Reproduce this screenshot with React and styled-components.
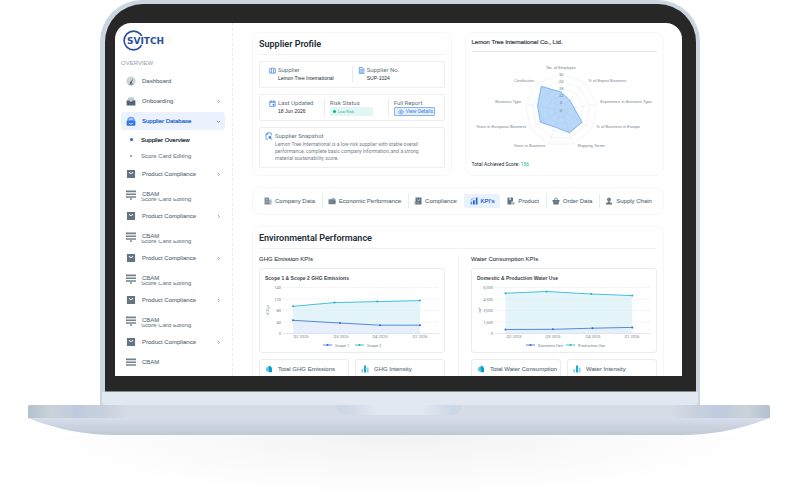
import React from 'react';
import styled, { createGlobalStyle, css } from 'styled-components';

const GlobalStyle = createGlobalStyle`
  * {
    box-sizing: border-box;
  }

  body {
    margin: 0;
    background: #fff;
    font-family: 'Liberation Sans', Arial, sans-serif;
    font-size: 6px;
    line-height: 8px;
    color: #637381;
  }

  h1, h2, h3, p, ul {
    margin: 0;
    padding: 0;
    font-size: inherit;
    font-weight: inherit;
  }

  ul {
    list-style: none;
  }

  svg {
    display: block;
    flex: none;
  }
`;

/* ---------- laptop ---------- */

const Page = styled.div`
  overflow: hidden;
`;

const Lid = styled.div`
  margin: 0 99px 0 100px;
  padding: 4px 4px 0 5px;
  border-radius: 42px 42px 0 0;
  background: #cbd6e1;
`;

const Bezel = styled.div`
  padding: 19px 14px 15px 10px;
  border: solid #85898e;
  border-width: 0 0 1px;
  border-radius: 38px 38px 0 0;
  background: #272727;
`;

const Chin = styled.div`
  height: 13px;
  margin: 0 -2px 0 -3px;
  border-radius: 0 0 3px 3px;
  background: #e1e8f0;
`;

const Screen = styled.div`
  display: flex;
  aspect-ratio: 567 / 353;
  overflow: hidden;
  border-radius: 16px 16px 0 0;
  background: #fff;
`;

const Base = styled.div`
  display: flex;
  justify-content: center;
  height: 13px;
  margin: 0 29px 0 28px;
  border-radius: 2px 2px 0 0;
  background: linear-gradient(
    90deg,
    #b3c0ce 0, #c9d3d9 23px, #becbde 48px, #c8d1de 76px, #d5dce6 100px,
    #d5dce6 calc(100% - 100px), #c8d1de calc(100% - 76px), #becbde calc(100% - 48px), #c9d3d9 calc(100% - 23px), #b3c0ce 100%
  );
`;

const Notch = styled.div`
  width: 17%;
  height: 10px;
  border-radius: 0 0 10px 10px;
  background: linear-gradient(90deg, #cdd8e6 8%, #e1e8f0 32%, #e1e8f0 68%, #cdd8e6 92%);
`;

const Belly = styled.svg`
  width: calc(100% - 57px);
  height: 17px;
  margin: 0 29px 0 28px;
`;

const Shadow = styled.div`
  height: 62px;
  margin: 0 28px;
  background: radial-gradient(ellipse 50% 100% at 50% 0, #f2f2f2, #f9f9f9 50%, #fff);
`;

/* ---------- sidebar ---------- */

const Sidebar = styled.aside`
  flex: none;
  width: 118px;
  padding: 7px 7px 0 6px;
  border-right: 1px dashed #e9edf1;
`;

const SectionLabel = styled.h2`
  margin: 8px 0 5px;
  color: #919eab;
`;

const NavList = styled.ul`
  display: flex;
  flex-direction: column;
  gap: 2px;
`;

const SubList = styled.ul`
  display: flex;
  flex-direction: column;
  gap: 1px;
`;

const NavLink = styled.a`
  display: flex;
  align-items: center;
  height: 18px;
  padding: 0 4px 0 5px;
  border-radius: 3px;
  color: ${({ $active }) => ($active ? '#2065d1' : '#637381')};
  background: ${({ $active }) => ($active ? '#ebf2fe' : 'transparent')};
  -webkit-text-stroke: ${({ $active }) => ($active ? '0.2px' : '0.1px')};
  text-decoration: none;
`;

const NavLabel = styled.span`
  flex: 1;
  margin-left: 6px;
  ${({ $raised }) =>
    $raised &&
    css`
      position: relative;
      z-index: 1;
      background: #fff;
    `}
`;

const SubLink = styled.a`
  display: flex;
  align-items: center;
  gap: 8px;
  height: ${({ $tucked }) => ($tucked ? '14px' : '15px')};
  margin-top: ${({ $tucked }) => ($tucked ? '-14px' : '0')};
  padding: ${({ $tucked }) => ($tucked ? '2px 0 0 8px' : '0 0 0 8px')};
  color: ${({ $active }) => ($active ? '#212b36' : '#7b8894')};
  -webkit-text-stroke: ${({ $active }) => ($active ? '0.2px' : '0.1px')};
  text-decoration: none;

  &::before {
    content: '';
    width: ${({ $active }) => ($active ? '3px' : '2px')};
    height: ${({ $active }) => ($active ? '3px' : '2px')};
    margin: ${({ $active }) => ($active ? '0 0 0 1px' : '0 1px')};
    border-radius: 50%;
    background: ${({ $active }) => ($active ? '#2065d1' : '#7b8894')};
  }
`;

/* ---------- content ---------- */

const Main = styled.main`
  flex: 1;
  min-width: 0;
  padding: 9px 18px 0 19px;
`;

const TopGrid = styled.div`
  display: grid;
  grid-template-columns: 1fr 1fr;
  gap: 13px;
`;

const Card = styled.section`
  padding: 5px 6px 7px;
  border: 1px solid #f4f6f8;
  border-radius: 8px;
`;

const CardTitle = styled.h2`
  margin-bottom: 6px;
  padding-bottom: 4px;
  border-bottom: 1px solid #eff1f3;
  font-family: Roboto, sans-serif;
  font-size: 9px;
  font-weight: 600;
  line-height: 12px;
  color: #212b36;
`;

const CompanyTitle = styled.h2`
  padding: 0 0 5px;
  border-bottom: 1px solid #e4e7ea;
  font-size: 6px;
  -webkit-text-stroke: 0.2px;
  color: #3a434d;
`;

const Box = styled.div`
  display: grid;
  grid-template-columns: ${({ $columns }) => $columns || '1fr'};
  margin-top: 6px;
  padding: 4px 0;
  border: 1px solid #eceef1;
  border-radius: 2px;
`;

const Field = styled.div`
  display: flex;
  gap: 2px;
  padding-left: ${({ $first }) => ($first ? '9px' : '5px')};
  border-left: ${({ $first }) => ($first ? 'none' : '1px solid #e9ecef')};

  > svg {
    margin-top: 1px;
  }
`;

const FieldLabel = styled.h3`
  font-family: Roboto, sans-serif;
  color: #637381;
`;

const FieldValue = styled.p`
  font-size: 5px;
  line-height: 9px;
  color: #212b36;
`;

const RiskBadge = styled.span`
  display: flex;
  align-items: center;
  gap: 2px;
  width: 43px;
  height: 9px;
  padding-left: 3px;
  border-radius: 1px;
  font-size: 4px;
  color: #14b399;
  background: #e2f7f4;

  &::before {
    content: '';
    width: 3px;
    height: 3px;
    border-radius: 50%;
    background: #00b496;
  }
`;

const ViewButton = styled.button`
  display: flex;
  align-items: center;
  gap: 2px;
  width: 41px;
  height: 9px;
  padding: 0 3px;
  border: 1px solid #8db3f0;
  border-radius: 1px;
  font-family: Roboto, sans-serif;
  font-size: 5px;
  line-height: 7px;
  white-space: nowrap;
  color: #3f7de0;
  background: #e6effe;
`;

const Snapshot = styled.div`
  display: flex;
  gap: 2px;
  padding: 0 10px 1px 5px;
`;

const SnapshotText = styled.p`
  margin-top: 1px;
  font-family: Roboto, sans-serif;
  font-size: 5px;
  line-height: 7px;
  color: #74828f;
`;

const Score = styled.p`
  font-size: 5px;
  font-family: Roboto, sans-serif;
  color: #212b36;

  strong {
    font-weight: 400;
    color: #14b399;
  }
`;

const ChartSvg = styled.svg`
  width: 100%;
  height: auto;

  text {
    font-family: ${({ $font }) => $font || 'Roboto'}, sans-serif;
    font-size: 4px;
    fill: #74828f;
  }
`;

const Tabs = styled.nav`
  display: flex;
  justify-content: space-between;
  margin: 11px 0;
  padding: 6px 5px;
  border: 1px solid #f4f6f8;
  border-radius: 8px;
`;

const Tab = styled.button`
  display: flex;
  align-items: center;
  gap: 3px;
  height: 14px;
  padding: 0 6px 0 5px;
  border: 0;
  border-left: 1px solid ${({ $divided }) => ($divided ? '#e9ecef' : 'transparent')};
  border-radius: ${({ $active }) => ($active ? '2px' : '0')};
  font-family: inherit;
  font-size: 6px;
  line-height: 8px;
  white-space: nowrap;
  -webkit-text-stroke: ${({ $active }) => ($active ? '0.2px' : '0.1px')};
  color: ${({ $active }) => ($active ? '#2065d1' : '#637381')};
  background: ${({ $active }) => ($active ? '#e9f1fe' : 'transparent')};
`;

const KpiGrid = styled.div`
  display: grid;
  grid-template-columns: 1fr 1fr;
`;

const KpiColumn = styled.div`
  padding-left: ${({ $second }) => ($second ? '12px' : '0')};
  padding-right: ${({ $second }) => ($second ? '0' : '13px')};
  border-left: ${({ $second }) => ($second ? '1px solid #eceef1' : 'none')};
`;

const KpiTitle = styled.h3`
  margin-bottom: 5px;
  -webkit-text-stroke: 0.1px;
  color: #3a434d;
`;

const ChartBox = styled.div`
  padding-top: 5px;
  border: 1px solid #e9ecef;
  border-radius: 3px;
`;

const ChartTitle = styled.h4`
  height: 9px;
  margin: 0 0 0 5px;
  font-size: 5px;
  font-weight: 700;
  color: #3a434d;
`;

const StatGrid = styled.div`
  display: grid;
  grid-template-columns: 1fr 1fr;
  gap: 6px;
  margin-top: 6px;
`;

const Stat = styled.div`
  display: flex;
  align-items: center;
  gap: 5px;
  height: 30px;
  padding: 0 0 10px 5px;
  border: 1px solid #e9ecef;
  border-radius: 3px;
  -webkit-text-stroke: 0.1px;
  white-space: nowrap;
`;

/* ---------- icons ---------- */

const Glyph = ({ size = 8, children }) => (
  <svg width={size} height={size} viewBox="0 0 16 16" fill="none" aria-hidden="true">
    {children}
  </svg>
);

const icons = {
  gauge: (
    <>
      <circle cx="8" cy="8" r="7.4" fill="#cdd4da" />
      <path d="M4 13.5a7 7 0 0 0 8 0l-2-2.4H6z" fill="#919eab" />
      <path d="M11.5 3.5 9.4 10a1.7 1.7 0 1 1-2-.8z" fill="#54636f" />
    </>
  ),
  inbox: (
    <>
      <path d="M4 2h8l2 5v3H2V7z" fill="#c1cad2" />
      <path d="M1 7h4.5l1 2h3l1-2H15v8H1z" fill="#54636f" />
    </>
  ),
  database: (
    <>
      <path d="M2 7a6 6 0 0 1 12 0v3H2z" fill="#6fa0f0" />
      <path d="M1 7.5h14V14a1.5 1.5 0 0 1-1.5 1.5h-11A1.5 1.5 0 0 1 1 14z" fill="#2f76e6" />
      <path d="M5 5h6M4.5 11c1 2.500 6 2.500 7 0" stroke="#fff" strokeWidth="1.2" />
    </>
  ),
  box: (
    <>
      <path d="M1.5 1.5h13v12a1 1 0 0 1-1 1h-11a1 1 0 0 1-1-1z" fill="#637381" />
      <path d="M5 5c1 3 5 3 6 0" stroke="#eef1f4" strokeWidth="1.8" />
    </>
  ),
  rows: (
    <>
      <path d="M3 2.5h13v2.6H3zM3 7h13v2.6H3zM3 11.5h13v2.6H3z" fill="#74828f" />
      <path d="M0 2.5h3v2.6H0zM0 7h3v2.6H0zM0 11.5h3v2.6H0z" fill="#637381" />
    </>
  ),
  supplier: <path d="M1.5 4h4V2.5h5V4h4v10h-13zM5.5 4v10M10.5 4v10" stroke="#2f76e6" strokeWidth="1.5" />,
  doc: (
    <path d="M3 1h7.5L13.5 4v11H3zM5.5 6h5.5M5.5 9h5.5M5.5 12h5.5" fill="#e1ecfe" stroke="#2f76e6" strokeWidth="1.4" />
  ),
  calendar: (
    <>
      <path d="M1.8 3h12.4v11.5H1.8zM5 .5V3M11 .5V3" stroke="#2f76e6" strokeWidth="1.5" />
      <path d="M2 6h12" stroke="#2f76e6" strokeWidth="1.5" />
      <path d="M8.5 9H12v3.5H8.5z" fill="#2f76e6" />
    </>
  ),
  snapshot: (
    <>
      <path
        d="M6 14.5H3.5A1.5 1.5 0 0 1 2 13V4.5l3-3h6A1.5 1.5 0 0 1 12.5 3v4M5.5 2v3H2.5"
        stroke="#2f76e6"
        strokeWidth="1.4"
      />
      <path d="M8 9h3.5v3.5H8zM11 12l3.5 3" stroke="#2f76e6" strokeWidth="1.6" fill="#8db3f0" />
    </>
  ),
  eye: (
    <>
      <path d="M1 8c3.5-7 10.5-7 14 0-3.5 7-10.5 7-14 0z" stroke="#3f7de0" strokeWidth="1.6" />
      <circle cx="8" cy="8" r="2.3" stroke="#3f7de0" strokeWidth="1.6" />
    </>
  ),
  building: (
    <>
      <path d="M1 1h9v14H1z" fill="#84919c" />
      <path d="M10 5h5v10h-5z" fill="#a5b0ba" />
      <path d="M4 5h3M4 9h3M12 8h1.5M12 11h1.5" stroke="#d5dbe0" strokeWidth="1" />
    </>
  ),
  wallet: (
    <>
      <path d="M5 4 12 1l2 4z" fill="#a5b0ba" />
      <path d="M1 4.5h14v10H1z" fill="#75838f" />
      <path d="M11 8.5h4V11h-4z" fill="#54636f" />
    </>
  ),
  shield: (
    <>
      <path d="M3 1h12v14H3z" fill="#637381" />
      <path d="M6.5 5 9 8l3-4M6 11.5h3" stroke="#dfe4e8" strokeWidth="1.4" />
      <path d="M1 8h3v7H1z" fill="#9aa6b1" />
    </>
  ),
  kpi: (
    <>
      <path d="M1 9h3.5v6H1z" fill="#5b92ee" />
      <path d="M6 6.5h3.5V15H6zM11.5 1H15v14h-3.5z" fill="#2065d1" />
      <path d="M1 6.5 8 2" stroke="#7ca9f3" strokeWidth="1.8" />
    </>
  ),
  product: (
    <>
      <path d="M1 1h4v5h3V1h4v8H9v6H1z" fill="#637381" />
      <path d="M5 1h3v4H5z" fill="#b4bdc6" />
      <path d="M10.5 10.5H15V15h-4.5z" fill="#9aa6b1" />
    </>
  ),
  basket: (
    <>
      <path d="M4.5 7 6.500 2h3l2 5" stroke="#75838f" strokeWidth="1.8" />
      <path d="M1 6h14v3h-1l-1 6H3L2 9H1z" fill="#637381" />
      <path d="M5 9.5h6" stroke="#aab4bd" strokeWidth="1" />
    </>
  ),
  person: (
    <>
      <circle cx="8" cy="5" r="4" fill="#75838f" />
      <path d="M5.500 9h5v2.500H14V15H2v-3.500h3.500z" fill="#637381" />
    </>
  ),
  pie: (
    <>
      <path d="M5 3a6 6.500 0 0 0-2 9.500L9 14V6z" fill="#5cc8e2" />
      <path d="M7 1.500a6.500 6.500 0 0 1 7 7.500v5.500H8z" fill="#0a9ecf" />
    </>
  ),
  bars: (
    <>
      <path d="M1 8h3.5v7H1zM11.5 5H15v10h-3.5z" fill="#7fd3ea" />
      <path d="M6.2 1h3.6v14H6.2z" fill="#0a9ecf" />
    </>
  ),
};

const Icon = ({ name, size }) => <Glyph size={size}>{icons[name]}</Glyph>;

const Chevron = ({ open }) => (
  <Glyph size={5}>
    <path d={open ? 'M3 6l5 5 5-5' : 'M6 3l5 5-5 5'} stroke="currentColor" strokeWidth="2" />
  </Glyph>
);

const LogoSvg = styled.svg`
  margin-left: 2px;

  text {
    font-family: 'DejaVu Sans', sans-serif;
    font-size: 9px;
    font-weight: 700;
    fill: #27509b;
  }
`;

const Logo = () => (
  <LogoSvg width="48" height="21" viewBox="0 0 48 21" role="img" aria-label="Svitch">
    <circle cx="10.5" cy="10.5" r="9.4" fill="none" stroke="#27509b" strokeWidth="1.6" />
    <text x="4" y="14" stroke="#fff" strokeWidth="1.6" paintOrder="stroke">
      SVITCH
    </text>
  </LogoSvg>
);

/* ---------- charts ---------- */

const RADAR = [
  { label: 'No. of Employee', r: 18, x: 89, y: 17, anchor: 'middle' },
  { label: '% of Export Business', r: 13, x: 116, y: 30, anchor: 'start' },
  { label: 'Experience in Business Type', r: 13, x: 128, y: 51, anchor: 'start' },
  { label: '% of Business in Europe', r: 24, x: 124, y: 76, anchor: 'start' },
  { label: 'Shipping Terms', r: 24, x: 105, y: 95, anchor: 'start' },
  { label: 'Years in Business', r: 18, x: 73, y: 95, anchor: 'end' },
  { label: 'Years in European Business', r: 24, x: 54, y: 76, anchor: 'end' },
  { label: 'Business Type', r: 24, x: 49, y: 51, anchor: 'end' },
  { label: 'Certificates', r: 31, x: 62, y: 30, anchor: 'end' },
];

const polar = (i, r) => {
  const a = (i * 40 * Math.PI) / 180;
  return `${(89 + r * Math.sin(a)).toFixed(2)},${(58 - r * Math.cos(a)).toFixed(2)}`;
};

const ring = (r) => RADAR.map((_, i) => polar(i, r)).join(' ');

const RadarChart = () => (
  <ChartSvg viewBox="0 0 185 108" $font="'Liberation Sans'" role="img" aria-label="Supplier score">
    {[7, 14, 22, 29, 36].map((r) => (
      <polygon key={r} points={ring(r)} fill="none" stroke="#e6e9ec" strokeWidth="0.5" />
    ))}
    {RADAR.map((axis, i) => (
      <polyline key={axis.label} points={`89,58 ${polar(i, 36)}`} stroke="#e6e9ec" strokeWidth="0.5" />
    ))}
    <polygon
      points={RADAR.map((axis, i) => polar(i, axis.r)).join(' ')}
      fill="#7fb6f2"
      fillOpacity="0.55"
      stroke="#6aa9f2"
      strokeWidth="0.8"
    />
    {[30, 24, 18, 12, 6, 0].map((v) => (
      <text key={v} x="89" y={59.5 - v * 1.2} textAnchor="middle">
        {v}
      </text>
    ))}
    {RADAR.map((axis) => (
      <text key={axis.label} x={axis.x} y={axis.y} textAnchor={axis.anchor}>
        {axis.label}
      </text>
    ))}
  </ChartSvg>
);

const TICK_Y = [4.5, 16, 27.5, 39, 50.5];

const AreaChart = ({ label, unit, ticks, quarters, upper, lower, legend }) => {
  const line = (points) => points.map((p) => p.join(',')).join(' ');
  const area = (points) => `${points[0][0]},50.5 ${line(points)} ${points[points.length - 1][0]},50.5`;

  return (
    <ChartSvg viewBox="0 0 184 69" role="img" aria-label={label}>
      <polygon points={area(upper)} fill="#e4f5fa" />
      <polygon points={area(lower)} fill="#e7eefc" />
      {ticks.map((tick, i) => (
        <g key={tick}>
          <line
            x1="23"
            x2="179"
            y1={TICK_Y[i]}
            y2={TICK_Y[i]}
            stroke={i === 4 ? '#d5dae0' : '#e3e7eb'}
            strokeWidth="0.6"
            strokeDasharray={i === 4 ? 'none' : '2 1'}
          />
          <text x="21" y={TICK_Y[i] + 1.5} textAnchor="end">
            {tick}
          </text>
        </g>
      ))}
      <text transform="translate(9 27) rotate(-90)" textAnchor="middle">
        {unit}
      </text>
      {[
        [upper, '#1fb0d2'],
        [lower, '#2f6fd8'],
      ].map(([points, color]) => (
        <g key={color} fill={color}>
          <polyline points={line(points)} fill="none" stroke={color} strokeWidth="0.8" />
          {points.map(([x, y]) => (
            <circle key={x} cx={x} cy={y} r="1" />
          ))}
        </g>
      ))}
      {quarters.map(([text, x]) => (
        <text key={text} x={x} y="55" textAnchor="middle">
          {text}
        </text>
      ))}
      {legend.map(({ text, x, color }) => (
        <g key={text}>
          <line x1={x} x2={x + 9} y1="62" y2="62" stroke={color} strokeWidth="0.8" />
          <circle cx={x + 4.5} cy="62" r="1" fill={color} />
          <text x={x + 12} y="63.5">
            {text}
          </text>
        </g>
      ))}
    </ChartSvg>
  );
};

/* ---------- data ---------- */

const COMPLIANCE_GROUPS = [1, 2, 3, 4, 5];

const TABS = [
  { label: 'Company Data', icon: 'building' },
  { label: 'Economic Performance', icon: 'wallet', divided: true },
  { label: 'Compliance', icon: 'shield', divided: true },
  { label: "KPI's", icon: 'kpi', active: true },
  { label: 'Product', icon: 'product' },
  { label: 'Order Data', icon: 'basket', divided: true },
  { label: 'Supply Chain', icon: 'person', divided: true },
];

const KPIS = [
  {
    title: 'GHG Emission KPIs',
    chart: {
      label: 'Scope 1 & Scope 2 GHG Emissions',
      unit: 'tCO₂e',
      ticks: ['140', '120', '80', '40', '0'],
      quarters: [['Q2 2025', 41], ['Q3 2025', 81], ['Q4 2025', 120], ['Q1 2026', 160]],
      upper: [[33, 23.3], [74.5, 19.6], [117.3, 18.6], [160, 17.6]],
      lower: [[33, 37.3], [80, 40], [120, 42.2], [160, 42.2]],
      legend: [
        { text: 'Scope 1', x: 63, color: '#2f6fd8' },
        { text: 'Scope 2', x: 95, color: '#1fb0d2' },
      ],
    },
    stats: ['Total GHG Emissions', 'GHG Intensity'],
  },
  {
    title: 'Water Consumption KPIs',
    chart: {
      label: 'Domestic & Production Water Use',
      unit: 'm³',
      ticks: ['6,000', '4,500', '3,000', '1,500', '0'],
      quarters: [['Q2 2025', 42], ['Q3 2025', 81], ['Q4 2025', 121], ['Q1 2026', 160]],
      upper: [[33.5, 10.2], [74.7, 8.5], [119.3, 11], [160.3, 12.6]],
      lower: [[33.5, 46.5], [81, 46.3], [120.5, 45.2], [160.3, 44.4]],
      legend: [
        { text: 'Domestic Use', x: 54, color: '#2f6fd8' },
        { text: 'Production Use', x: 94, color: '#1fb0d2' },
      ],
    },
    stats: ['Total Water Consumption', 'Water Intensity'],
  },
];

const NavItem = ({ icon, label, chevron, active, open, raised }) => (
  <li>
    <NavLink href="#" $active={active}>
      <Icon name={icon} size={10} />
      <NavLabel $raised={raised}>{label}</NavLabel>
      {chevron && <Chevron open={open} />}
    </NavLink>
  </li>
);

const SideNav = () => (
  <Sidebar>
    <Logo />
    <SectionLabel>OVERVIEW</SectionLabel>
    <NavList>
      <NavItem icon="gauge" label="Dashboard" />
      <NavItem icon="inbox" label="Onboarding" chevron />
      <NavItem icon="database" label="Supplier Database" chevron active open />
      <li>
        <SubList>
          <li>
            <SubLink href="#" $active>Supplier Overview</SubLink>
          </li>
          <li>
            <SubLink href="#">Score Card Editing</SubLink>
          </li>
        </SubList>
      </li>
      {COMPLIANCE_GROUPS.map((group) => (
        <React.Fragment key={`group_${group}`}>
          <NavItem icon="box" label="Product Compliance" chevron />
          <NavItem icon="rows" label="CBAM" raised />
          {group < COMPLIANCE_GROUPS.length && (
            <li>
              <SubLink href="#" $tucked>Score Card Editing</SubLink>
            </li>
          )}
        </React.Fragment>
      ))}
    </NavList>
  </Sidebar>
);

const SupplierProfile = () => (
  <Card>
    <CardTitle>Supplier Profile</CardTitle>
    <Box $columns="1fr 1fr">
      <Field $first>
        <Icon name="supplier" size={7} />
        <div>
          <FieldLabel>Supplier</FieldLabel>
          <FieldValue>Lemon Tree International</FieldValue>
        </div>
      </Field>
      <Field>
        <Icon name="doc" size={7} />
        <div>
          <FieldLabel>Supplier No.</FieldLabel>
          <FieldValue>SUP-1024</FieldValue>
        </div>
      </Field>
    </Box>
    <Box $columns="64fr 64fr 56fr">
      <Field $first>
        <Icon name="calendar" size={7} />
        <div>
          <FieldLabel>Last Updated</FieldLabel>
          <FieldValue>18 Jun 2026</FieldValue>
        </div>
      </Field>
      <Field>
        <div>
          <FieldLabel>Risk Status</FieldLabel>
          <RiskBadge>Low Risk</RiskBadge>
        </div>
      </Field>
      <Field>
        <div>
          <FieldLabel>Full Report</FieldLabel>
          <ViewButton type="button">
            <Icon name="eye" size={6} />
            View Details
          </ViewButton>
        </div>
      </Field>
    </Box>
    <Box>
      <Snapshot>
        <Icon name="snapshot" size={8} />
        <div>
          <FieldLabel>Supplier Snapshot</FieldLabel>
          <SnapshotText>
            Lemon Tree International is a low-risk supplier with stable overall performance, complete basic company
            information, and a strong material sustainability score.
          </SnapshotText>
        </div>
      </Snapshot>
    </Box>
  </Card>
);

const SupplierScore = () => (
  <Card>
    <CompanyTitle>Lemon Tree International Co., Ltd.</CompanyTitle>
    <RadarChart />
    <Score>
      Total Achieved Score: <strong>156</strong>
    </Score>
  </Card>
);

const Performance = () => (
  <Card>
    <CardTitle>Environmental Performance</CardTitle>
    <KpiGrid>
      {KPIS.map(({ title, chart, stats }, i) => (
        <KpiColumn key={title} $second={i === 1}>
          <KpiTitle>{title}</KpiTitle>
          <ChartBox>
            <ChartTitle>{chart.label}</ChartTitle>
            <AreaChart {...chart} />
          </ChartBox>
          <StatGrid>
            <Stat>
              <Icon name="pie" />
              {stats[0]}
            </Stat>
            <Stat>
              <Icon name="bars" />
              {stats[1]}
            </Stat>
          </StatGrid>
        </KpiColumn>
      ))}
    </KpiGrid>
  </Card>
);

const App = () => (
  <>
    <GlobalStyle />
    <Page>
      <Lid>
        <Bezel>
          <Screen>
            <SideNav />
            <Main>
              <TopGrid>
                <SupplierProfile />
                <SupplierScore />
              </TopGrid>
              <Tabs>
                {TABS.map(({ label, icon, divided, active }) => (
                  <Tab key={label} type="button" $divided={divided} $active={active}>
                    <Icon name={icon} />
                    {label}
                  </Tab>
                ))}
              </Tabs>
              <Performance />
            </Main>
          </Screen>
        </Bezel>
        <Chin />
      </Lid>
      <Base>
        <Notch />
      </Base>
      <Belly viewBox="0 0 742 17" preserveAspectRatio="none" aria-hidden="true">
        <defs>
          <linearGradient id="belly" x1="0" y1="0" x2="0" y2="1">
            <stop offset="0" stopColor="#d7ddeb" />
            <stop offset="1" stopColor="#bfc9d6" />
          </linearGradient>
        </defs>
        <path d="M0 0H742C715 11 685 17 655 17H87C57 17 27 11 0 0z" fill="url(#belly)" />
      </Belly>
      <Shadow />
    </Page>
  </>
);

export default App;
